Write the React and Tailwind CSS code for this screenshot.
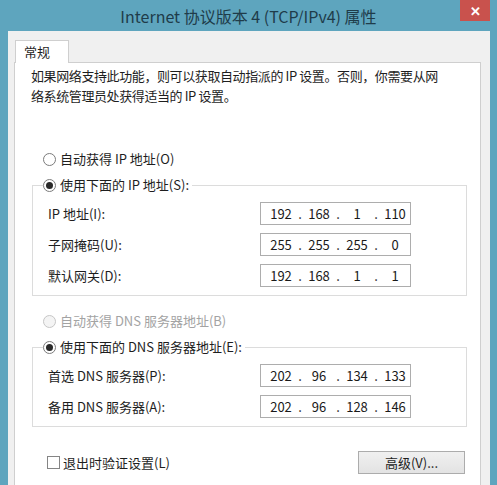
const FONT = { fontFamily: '"Noto Sans CJK SC", "Noto Sans", sans-serif' };

function Radio({ checked, disabled }) {
  return (
    <span
      className={
        "w-[13px] h-[13px] rounded-full border flex items-center justify-center shrink-0 " +
        (disabled ? "border-[#c6c6c6] bg-[#f4f4f4]" : "border-[#7b7b7b] bg-white")
      }
    >
      {checked && <span className="w-[7px] h-[7px] rounded-full bg-[#2a2a2a]" />}
    </span>
  );
}

function IpBox({ parts }) {
  return (
    <div className="w-[151px] h-[23px] border border-[#adadad] bg-white flex items-center pl-[5px] text-[13px] text-[#1a1a1a]">
      {parts.map((p, i) => (
        <div key={i} className="flex items-center">
          <span className="w-[30px] text-center">{p}</span>
          {i < 3 && <span className="w-[8px] text-center">.</span>}
        </div>
      ))}
    </div>
  );
}

function Row({ label, parts }) {
  return (
    <div className="flex items-center">
      <span className="w-[212px]">{label}</span>
      <IpBox parts={parts} />
    </div>
  );
}

export default function App() {
  return (
    <div
      className="w-[497px] h-[485px] bg-[#5ea5be] overflow-hidden flex flex-col text-[13px] text-[#1e1e1e]"
      style={FONT}
    >
      <div className="h-[31px] relative flex items-center justify-center text-[16px] text-[#1f3c4a] shrink-0">
        Internet 协议版本 4 (TCP/IPv4) 属性
        <div className="absolute right-[7px] top-0 w-[30px] h-[21px] bg-[#c9524d] flex items-center justify-center text-white text-[13px] font-bold leading-none">
          ✕
        </div>
      </div>

      <div className="flex-1 ml-[8px] mr-[7px] bg-[#f0f0f0] pt-[9px] pl-[6px] pr-[9px] flex flex-col">
        <div className="ml-px w-[54px] h-[23px] bg-white border border-b-0 border-[#cfcfcf] -mb-px relative z-10 pl-[8px] pt-[1px] leading-[20px]">
          常规
        </div>
        <div className="flex-1 bg-white border border-b-0 border-[#cfcfcf] pl-[16px] pr-[13px] pt-[3px]">
          <p className="leading-[20px] tracking-[-0.4px]">
            如果网络支持此功能，则可以获取自动指派的 IP 设置。否则，你需要从网
            <br />
            络系统管理员处获得适当的 IP 设置。
          </p>

          <div className="mt-[43px] ml-[12px] h-[20px] flex items-center gap-[4px]">
            <Radio />
            <span>自动获得 IP 地址(O)</span>
          </div>

          <fieldset className="mt-[6px] ml-px border border-[#dcdcdc] pb-[8px]">
            <legend className="ml-[10px] pr-[3px] h-[20px] flex items-center gap-[4px]">
              <Radio checked />
              <span>使用下面的 IP 地址(S):</span>
            </legend>
            <div className="pl-[15px] pt-[7px] flex flex-col gap-[8px]">
              <Row label="IP 地址(I):" parts={["192", "168", "1", "110"]} />
              <Row label="子网掩码(U):" parts={["255", "255", "255", "0"]} />
              <Row label="默认网关(D):" parts={["192", "168", "1", "1"]} />
            </div>
          </fieldset>

          <div className="mt-[15px] ml-[12px] h-[20px] flex items-center gap-[4px] text-[#a3a3a3]">
            <Radio disabled />
            <span>自动获得 DNS 服务器地址(B)</span>
          </div>

          <fieldset className="mt-[6px] ml-px border border-[#dcdcdc] pb-[8px]">
            <legend className="ml-[10px] pr-[3px] h-[20px] flex items-center gap-[4px]">
              <Radio checked />
              <span>使用下面的 DNS 服务器地址(E):</span>
            </legend>
            <div className="pl-[15px] pt-[7px] flex flex-col gap-[8px]">
              <Row label="首选 DNS 服务器(P):" parts={["202", "96", "134", "133"]} />
              <Row label="备用 DNS 服务器(A):" parts={["202", "96", "128", "146"]} />
            </div>
          </fieldset>

          <div className="mt-[24px] flex items-center justify-between">
            <div className="ml-[16px] flex items-center gap-[3px]">
              <span className="w-[13px] h-[13px] border border-[#858585] bg-white" />
              <span>退出时验证设置(L)</span>
            </div>
            <div className="mr-[2px] w-[107px] h-[23px] border border-[#acacac] bg-gradient-to-b from-[#f0f0f0] to-[#e3e3e3] flex items-center justify-center">
              高级(V)...
            </div>
          </div>
        </div>
      </div>
    </div>
  );
}
